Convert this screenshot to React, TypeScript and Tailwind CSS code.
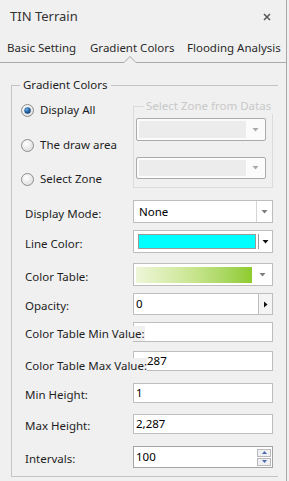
import React from 'react';

const font = { fontFamily: '"Noto Sans", "Open Sans", sans-serif' };

const Arrow = ({ dark = false }: { dark?: boolean }) => (
    <svg width="7" height="4" viewBox="0 0 7 4">
        <polygon points="0.5,0 6.5,0 3.5,3.5" fill={dark ? '#111' : '#7c7c7c'} />
    </svg>
);

const Radio = ({ checked, label }: { checked?: boolean; label: string }) => (
    <div className="flex items-center h-[20px] gap-[6px]">
        <svg width="13" height="13" viewBox="0 0 13 13">
            <defs>
                <radialGradient id="rg" cx="40%" cy="35%" r="70%">
                    <stop offset="0%" stopColor="#ffffff" />
                    <stop offset="100%" stopColor="#dcdcdc" />
                </radialGradient>
                <radialGradient id="dot" cx="40%" cy="35%" r="70%">
                    <stop offset="0%" stopColor="#6fb3e8" />
                    <stop offset="60%" stopColor="#1b5c9a" />
                    <stop offset="100%" stopColor="#0d3a6a" />
                </radialGradient>
            </defs>
            <circle cx="6.5" cy="6.5" r="6" fill="url(#rg)" stroke="#8e8e8e" />
            {checked && <circle cx="6.5" cy="6.5" r="3.2" fill="url(#dot)" />}
        </svg>
        <span className="text-[11.5px] leading-[14px] text-[#1e1e1e] whitespace-nowrap">{label}</span>
    </div>
);

const Row = ({ label, h, mt, children, labelShift = 0 }: { label: string; h: number; mt: number; children: React.ReactNode; labelShift?: number }) => (
    <div className="flex items-center" style={{ height: h, marginTop: mt }}>
        <div className="w-[108px] shrink-0" style={{ marginTop: labelShift }}>
            <span className="relative z-10 whitespace-nowrap bg-[#f0f0f0] text-[11.5px] leading-[14px] text-[#1e1e1e]">{label}</span>
        </div>
        <div className="w-[140px] h-full shrink-0">{children}</div>
    </div>
);

const TextBox = ({ value }: { value?: string }) => (
    <div className="h-full border border-[#bdbdbd] bg-white pl-[2px] flex items-center text-[11.5px] text-black">{value}</div>
);

export default function App() {
    return (
        <div className="w-[289px] h-[481px] bg-[#f0f0f0] overflow-hidden" style={font}>
            <div className="w-[287px] h-full border-r border-[#a7a7a7] flex flex-col">
                {/* title */}
                <div className="h-[34px] flex items-center justify-between pl-[10px] pr-[15px]">
                    <span className="text-[13px] text-[#333]">TIN Terrain</span>
                    <svg width="8" height="8" viewBox="0 0 8 8">
                        <path d="M1 1 L7 7 M7 1 L1 7" stroke="#555" strokeWidth="1.5" />
                    </svg>
                </div>

                {/* tabs */}
                <div className="h-[22px] pt-[6px] flex text-[11.5px] leading-[16px] text-[#2b2b2b] whitespace-nowrap">
                    <span className="w-[90px] pl-[7px] shrink-0">Basic Setting</span>
                    <span className="w-[97px] shrink-0">Gradient Colors</span>
                    <span>Flooding Analysis</span>
                </div>
                <svg width="287" height="7" viewBox="0 0 287 7" className="block">
                    <polyline points="0,6.5 124,6.5 130,0.5 136,6.5 287,6.5" fill="none" stroke="#a9a9a9" />
                </svg>

                {/* group */}
                <div className="mt-[22px] ml-[11px] w-[267px] border-l border-t border-b border-[#c4c4c4] flex flex-col pb-[8px]">
                    <span className="self-start -mt-[9px] ml-[8px] px-[3px] h-[16px] leading-[16px] bg-[#f0f0f0] text-[11.5px] text-[#1e1e1e]">Gradient Colors</span>

                    <div className="h-[107px] flex">
                        <div className="w-[121px] pl-[9px] pt-[7px] flex flex-col">
                            <Radio checked label="Display All" />
                            <div className="mt-[15px]"><Radio label="The draw area" /></div>
                            <div className="mt-[14px]"><Radio label="Select Zone" /></div>
                        </div>
                        <div className="mt-[13px] w-[140px] h-[82px] border border-[#dcdcdc] flex flex-col">
                            <span className="self-start -mt-[9px] ml-[10px] px-[2px] h-[16px] leading-[16px] bg-[#f0f0f0] text-[11.5px] text-[#c8c8c8] whitespace-nowrap">Select Zone from Datas</span>
                            <div className="mt-[4px] ml-[2px] w-[130px] h-[23px] rounded-[2px] border border-[#ababab] bg-[#fbfbfb] flex items-center pl-[2px]">
                                <div className="w-[107px] h-[17px] bg-[#ececec]" />
                                <div className="flex-1 flex justify-center"><svg width="7" height="4" viewBox="0 0 7 4"><polygon points="0.5,0 6.5,0 3.5,3.5" fill="#a8a8a8" /></svg></div>
                            </div>
                            <div className="mt-[16px] ml-[2px] w-[130px] h-[22px] rounded-[2px] border border-[#ababab] bg-[#fbfbfb] flex items-center pl-[2px]">
                                <div className="w-[107px] h-[16px] bg-[#ececec]" />
                                <div className="flex-1 flex justify-center"><svg width="7" height="4" viewBox="0 0 7 4"><polygon points="0.5,0 6.5,0 3.5,3.5" fill="#a8a8a8" /></svg></div>
                            </div>
                        </div>
                    </div>

                    <div className="pl-[13px] flex flex-col">
                        <Row label="Display Mode:" h={23} mt={0}>
                            <div className="h-full border border-[#bdbdbd] bg-white flex">
                                <div className="flex-1 pl-[5px] flex items-center text-[11.5px] text-black">None</div>
                                <div className="w-[16px] border-l border-[#d6d6d6] flex items-center justify-center"><Arrow /></div>
                            </div>
                        </Row>
                        <Row label="Line Color:" h={23} mt={7}>
                            <div className="h-full border border-[#bdbdbd] bg-white flex items-center pl-[4px]">
                                <div className="w-[118px] h-[15px] bg-[#00ffff] border border-[#9a9a9a]" />
                                <div className="ml-[2px] w-px h-[15px] bg-[#9a9a9a]" />
                                <div className="flex-1 flex justify-center"><Arrow dark /></div>
                            </div>
                        </Row>
                        <Row label="Color Table:" h={23} mt={10}>
                            <div className="h-full border border-[#bdbdbd] bg-white flex items-center pl-[2px]">
                                <div className="w-[116px] h-[16px] bg-gradient-to-r from-[#eef6d8] via-[#c8e58e] to-[#8fcb2b]" />
                                <div className="flex-1 flex justify-center"><Arrow /></div>
                            </div>
                        </Row>
                        <Row label="Opacity:" h={22} mt={7}>
                            <div className="h-full flex">
                                <div className="flex-1 border border-[#bdbdbd] bg-white pl-[2px] flex items-center text-[11.5px] text-black">0</div>
                                <div className="w-[15px] -ml-px border border-[#bdbdbd] bg-[#f4f4f4] flex items-center justify-center">
                                    <svg width="4" height="7" viewBox="0 0 4 7"><polygon points="0,0.5 3.5,3.5 0,6.5" fill="#111" /></svg>
                                </div>
                            </div>
                        </Row>
                        <Row label="Color Table Min Value:" h={20} mt={7}>
                            <TextBox />
                        </Row>
                        <Row label="Color Table Max Value:" h={20} mt={9} labelShift={5}>
                            <div className="h-full border border-[#bdbdbd] bg-white pl-[13px] flex items-center text-[11.5px] text-black">287</div>
                        </Row>
                        <Row label="Min Height:" h={20} mt={12}>
                            <TextBox value="1" />
                        </Row>
                        <Row label="Max Height:" h={20} mt={11}>
                            <TextBox value="2,287" />
                        </Row>
                        <Row label="Intervals:" h={22} mt={12}>
                            <div className="h-full border border-[#a4a4a4] bg-white flex items-center pl-[2px]">
                                <span className="flex-1 text-[11.5px] text-black">100</span>
                                <div className="mr-[1px] w-[14px] flex flex-col gap-px">
                                    <div className="h-[8px] border border-[#b9b9b9] bg-[#eef0f4] flex items-center justify-center">
                                        <svg width="5" height="3" viewBox="0 0 5 3"><polygon points="0,3 5,3 2.5,0" fill="#4b69ad" /></svg>
                                    </div>
                                    <div className="h-[8px] border border-[#b9b9b9] bg-[#eef0f4] flex items-center justify-center">
                                        <svg width="5" height="3" viewBox="0 0 5 3"><polygon points="0,0 5,0 2.5,3" fill="#4b69ad" /></svg>
                                    </div>
                                </div>
                            </div>
                        </Row>
                    </div>
                </div>
            </div>
        </div>
    );
}
